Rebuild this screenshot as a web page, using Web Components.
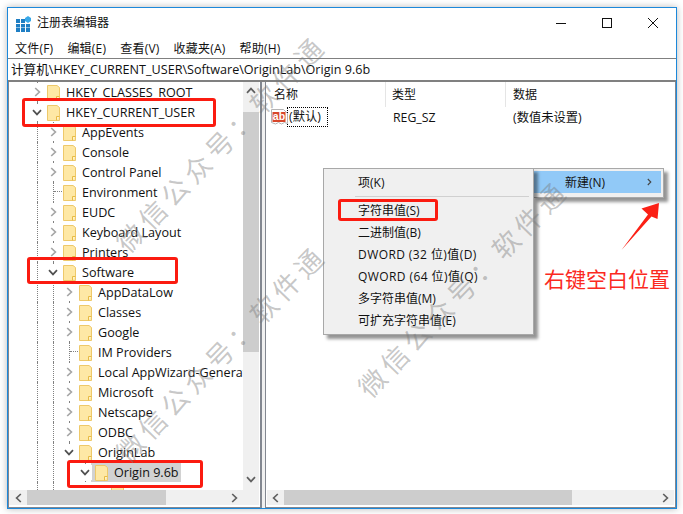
<!DOCTYPE html>
<html lang="zh-CN">
<head>
<meta charset="utf-8">
<title>注册表编辑器</title>
<style>
html,body{margin:0;padding:0;background:#fff;width:683px;height:514px;overflow:hidden}
body{font:12px "Open Sans","Noto Sans CJK SC",sans-serif;color:#111}
</style>
</head>
<body>
<reg-window>
  <title-bar slot="title">注册表编辑器</title-bar>
  <menu-bar slot="menu"><span>文件(F)</span><span>编辑(E)</span><span>查看(V)</span><span>收藏夹(A)</span><span>帮助(H)</span></menu-bar>
  <address-bar slot="address">计算机\HKEY_CURRENT_USER\Software\OriginLab\Origin 9.6b</address-bar>
  <tree-pane slot="tree">
    <tree-row level="0" state="closed" label="HKEY_CLASSES_ROOT"></tree-row>
    <tree-row level="0" state="open" label="HKEY_CURRENT_USER"></tree-row>
    <tree-row level="1" guides="0" state="closed" label="AppEvents"></tree-row>
    <tree-row level="1" guides="0" state="closed" label="Console"></tree-row>
    <tree-row level="1" guides="0" state="closed" label="Control Panel"></tree-row>
    <tree-row level="1" guides="0" state="leaf" label="Environment"></tree-row>
    <tree-row level="1" guides="0" state="closed" label="EUDC"></tree-row>
    <tree-row level="1" guides="0" state="closed" label="Keyboard Layout"></tree-row>
    <tree-row level="1" guides="0" state="closed" label="Printers"></tree-row>
    <tree-row level="1" guides="0" state="open" label="Software"></tree-row>
    <tree-row level="2" guides="0,1" state="closed" label="AppDataLow"></tree-row>
    <tree-row level="2" guides="0,1" state="closed" label="Classes"></tree-row>
    <tree-row level="2" guides="0,1" state="closed" label="Google"></tree-row>
    <tree-row level="2" guides="0,1" state="leaf" label="IM Providers"></tree-row>
    <tree-row level="2" guides="0,1" state="closed" label="Local AppWizard-Generated Applications"></tree-row>
    <tree-row level="2" guides="0,1" state="closed" label="Microsoft"></tree-row>
    <tree-row level="2" guides="0,1" state="closed" label="Netscape"></tree-row>
    <tree-row level="2" guides="0,1" state="closed" label="ODBC"></tree-row>
    <tree-row level="2" guides="0,1" state="open" label="OriginLab"></tree-row>
    <tree-row level="3" guides="0,1" state="open" selected label="Origin 9.6b"></tree-row>
    <tree-row level="4" guides="0,1" state="none" label=""></tree-row>
  </tree-pane>
  <list-pane slot="list">
    <list-head><span>名称</span><span>类型</span><span>数据</span></list-head>
    <list-item><span>(默认)</span><span>REG_SZ</span><span>(数值未设置)</span></list-item>
  </list-pane>
  <context-menu slot="overlay">
    <menu-item>项(K)</menu-item>
    <menu-sep></menu-sep>
    <menu-item>字符串值(S)</menu-item>
    <menu-item>二进制值(B)</menu-item>
    <menu-item wide>DWORD (32 位)值(D)</menu-item>
    <menu-item wide>QWORD (64 位)值(Q)</menu-item>
    <menu-item>多字符串值(M)</menu-item>
    <menu-item>可扩充字符串值(E)</menu-item>
  </context-menu>
  <sub-menu slot="overlay">新建(N)</sub-menu>
  <red-box slot="overlay" style="left:14px;top:90px;width:194px;height:29px"></red-box>
  <red-box slot="overlay" style="left:19px;top:249px;width:151px;height:27px"></red-box>
  <red-box slot="overlay" style="left:59px;top:452px;width:136px;height:28px"></red-box>
  <red-box slot="overlay" style="left:330px;top:191px;width:100px;height:22px"></red-box>
  <red-arrow slot="overlay"></red-arrow>
  <call-out slot="overlay">右键空白位置</call-out>
  <water-mark slot="overlay" style="left:211px;top:137px">微信公众号：软件通</water-mark>
  <water-mark slot="overlay" style="left:211px;top:347px">微信公众号：软件通</water-mark>
  <water-mark slot="overlay" style="left:453px;top:282px">微信公众号：软件通</water-mark>
</reg-window>

<script>
function define(name,css,html,init){
  customElements.define(name,class extends HTMLElement{
    constructor(){super();this.attachShadow({mode:'open'});}
    connectedCallback(){
      if(this._done)return;this._done=true;
      const a=n=>this.getAttribute(n);
      this.shadowRoot.innerHTML='<style>'+css+'</style>'+(typeof html==='function'?html(a,this):html);
      if(init)init(this);
    }
  });
}
const chevronR='<svg width="7" height="10" viewBox="0 0 7 10"><path d="M1.2 1 5.4 5 1.2 9" fill="none" stroke="currentColor" stroke-width="1.7"/></svg>';
const chevronL='<svg width="7" height="10" viewBox="0 0 7 10"><path d="M5.8 1 1.6 5 5.8 9" fill="none" stroke="currentColor" stroke-width="1.7"/></svg>';
const chevronU='<svg width="10" height="7" viewBox="0 0 10 7"><path d="M1 5.800 5 1.600 9 5.800" fill="none" stroke="currentColor" stroke-width="1.7"/></svg>';
const chevronD='<svg width="10" height="7" viewBox="0 0 10 7"><path d="M1 1.200 5 5.400 9 1.200" fill="none" stroke="currentColor" stroke-width="1.7"/></svg>';
const chevronSmall='<svg width="5" height="8" viewBox="0 0 5 8"><path d="M.8 1 3.800 4 .8 7" fill="none" stroke="currentColor" stroke-width="1.1"/></svg>';

define('reg-window',`
  :host{display:flex;flex-direction:column;position:relative;box-sizing:border-box;width:670px;height:502px;margin:7px 0 0 7px;
    border:1px solid #1c88da;background:#f0f0f0;box-shadow:0 0 7px rgba(0,0,0,.28)}
  .top{background:#fff}
  .panes{flex:1;display:flex;gap:3px;min-height:0}
  ::slotted([slot=tree]){width:254px}
  ::slotted([slot=list]){flex:1}
`,`<div class="top"><slot name="title"></slot><slot name="menu"></slot></div><slot name="address"></slot>
<div class="panes"><slot name="tree"></slot><slot name="list"></slot></div><slot name="overlay"></slot>`);

define('title-bar',`
  :host{display:flex;align-items:center;height:30px;padding:0 0 0 8px}
  svg.app{flex:none;margin-right:6px;margin-top:1px}
  .t{flex:1;font-size:12px;margin-top:-2px}
  .b{display:flex;width:46px;height:30px;align-items:center;justify-content:center}
  .b svg{display:block}
`,`<svg class="app" width="15" height="16" viewBox="0 0 15 16">
  <g fill="#1f7fc4"><rect x="0" y="3" width="4" height="4"/><rect x="5" y="3" width="4" height="4"/>
  <rect x="0" y="8" width="4" height="3.500"/><rect x="5" y="8" width="4" height="3.500"/><rect x="10" y="8" width="4" height="3.500"/>
  <rect x="0" y="12" width="4" height="4"/><rect x="5" y="12" width="4" height="4"/><rect x="10" y="12" width="4" height="4"/></g>
  <path d="M12 0l3 2v3l-3 2-3-2V2z" fill="#38a8e8"/>
</svg><div class="t"><slot></slot></div>
<div class="b"><svg width="10" height="10" viewBox="0 0 10 10"><path d="M0 5.500h10" stroke="#111" stroke-width="1"/></svg></div>
<div class="b"><svg width="10" height="10" viewBox="0 0 10 10"><rect x=".5" y=".5" width="9" height="9" fill="none" stroke="#111"/></svg></div>
<div class="b"><svg width="10" height="10" viewBox="0 0 10 10"><path d="M0 0l10 10M10 0L0 10" stroke="#111" stroke-width="1" fill="none"/></svg></div>`);

define('menu-bar',`
  :host{display:flex;height:20px;align-items:center;padding-left:7px;gap:14px;font-size:12px;letter-spacing:.22px;padding-bottom:1px;box-sizing:border-box}
`,`<slot></slot>`);

define('address-bar',`
  :host{display:flex;box-sizing:border-box;height:24px;align-items:center;padding:0 3px 2px;background:#fff;border:solid #808080;border-width:1px 0 2px;font-size:12.6px;white-space:nowrap}
`,`<slot></slot>`);

define('tree-pane',`
  :host{display:grid;grid-template-columns:1fr 16px;grid-template-rows:1fr 15px;box-sizing:border-box;background:#fff;border:solid #828790;border-width:0 2px 1px 1px;padding:0 1px 2px 0;min-height:0}
  .rows{overflow:hidden;padding-left:20px;min-width:0;min-height:0}
  .v{grid-row:1/3;grid-column:2;background:#f0f0f0;display:flex;flex-direction:column;align-items:center;color:#606060}
  .a{height:17px;display:flex;align-items:center;justify-content:center}
  .sp{height:13px;flex:none}
  .thumb{width:16px;height:240px;background:#cdcdcd;flex:none}
  .fill{flex:1}
  .h{grid-row:2;grid-column:1;background:#f0f0f0;display:flex;align-items:center;color:#606060}
  .h .ar{width:18px;display:flex;justify-content:center;flex:none}
  .h .thumbh{height:15px;width:139px;background:#cdcdcd;flex:none}
  .h .f{flex:1}
`,`<div class="rows"><slot></slot></div>
<div class="v"><div class="a">${chevronU}</div><div class="sp"></div><div class="thumb"></div><div class="fill"></div><div class="a">${chevronD}</div><div style="height:17px"></div></div>
<div class="h"><div class="ar">${chevronL}</div><div class="thumbh"></div><div class="f"></div><div class="ar">${chevronR}</div></div>`);

define('tree-row',`
  :host{display:flex;height:20px;white-space:nowrap;align-items:stretch;font-size:12.6px}
  .g{width:16px;flex:none;position:relative}
  .g.on::before,.c::before{content:"";position:absolute;left:8px;top:0;bottom:0;border-left:1px dotted #808080}
  .c{width:16px;flex:none;position:relative;display:flex;align-items:center;justify-content:center}
  .c svg{position:relative;background:#fff;display:block;padding:4px 2px;box-sizing:content-box}
  .c.closed{color:#a6a6a6}.c.open{color:#505050}
  .c.leaf::after{content:"";position:absolute;left:9px;right:-1px;top:9px;border-top:1px dotted #808080}
  .c.none::before{display:none}
  .s{display:flex;align-items:center;padding:0 2px 0 0}
  .s.sel{background:#d2d2d2;margin-left:-2px;padding:0 2px 0 4px}
  .f{display:block;margin:1px 6px 0 2px;flex:none}
  .s.sel .f{margin-left:0}
`,(a)=>{
  const lv=+a('level'),gs=(a('guides')||'').split(',');
  let h='';
  for(let i=0;i<lv;i++)h+=`<span class="g ${gs.includes(String(i))?'on':''}"></span>`;
  const st=a('state');
  const ch=st==='closed'?chevronR:st==='open'?chevronD:'';
  h+=`<span class="c ${st}">${ch}</span>`;
  h+=`<span class="s ${a('selected')!==null?'sel':''}"><svg class="f" width="13" height="16" viewBox="0 0 13 16">
   <path d="M.5.5h9.500l2.500 2V15.500H.5z" fill="#fee8a5" stroke="#eec96a"/><path d="M9.500 15.500v-4h3" fill="#fff3c9" stroke="#e8bb45"/></svg><span>${a('label')}</span></span>`;
  return h;
});

define('list-pane',`
  :host{display:flex;flex-direction:column;box-sizing:border-box;background:#fff;border:solid #828790;border-width:0 1px 1px 1px;min-height:0}
  .b{flex:1}
  .h{height:15px;margin:0 1px 2px 1px;background:#f0f0f0;display:flex;align-items:center;color:#606060}
  .ar{width:17px;display:flex;justify-content:center;flex:none}
  .t{width:288px;height:15px;background:#cdcdcd}
  .f{flex:1}
`,`<slot></slot><div class="b"></div><div class="h"><div class="ar">${chevronL}</div><div class="t"></div><div class="f"></div><div class="ar">${chevronR}</div></div>`);

define('list-head',`
  :host{display:grid;grid-template-columns:120px 120px 1fr;height:25px;font-size:12px;align-items:stretch}
  ::slotted(span){padding:3px 0 0 6px;border-right:1px solid #e5e5e5;box-sizing:border-box;height:25px}
  ::slotted(span:first-child){padding-left:8px}
  ::slotted(span:last-child){padding-left:7px;border-right:0}
`,`<slot></slot>`);

define('list-item',`
  :host{display:grid;grid-template-columns:120px 120px 1fr;height:20px;font-size:12.3px;align-items:center;position:relative}
  ::slotted(span:first-child){margin-left:21px;justify-self:start;padding:0 6px 0 1px;border:1px dotted #000;height:18px;line-height:18px}
  ::slotted(span){padding-left:7px}
  svg{position:absolute;left:5px;top:2px}
`,`<svg width="18" height="17" viewBox="0 0 18 17"><path d="M.5.5h12l4 4v10l-3-1-3 1.500-3-1.500-3 1.500-4-1.500z" fill="#fff" stroke="#b4b4b4"/><rect x="1.500" y="3" width="13" height="10" fill="#d8472b"/><text x="8" y="11.200" font-size="10.500" font-weight="700" fill="#fff" text-anchor="middle" font-family="Liberation Sans,sans-serif">ab</text></svg><slot></slot>`);

define('context-menu',`
  :host{position:absolute;left:315px;top:160px;box-sizing:border-box;width:211px;height:167px;background:#f0f0f0;border:1px solid #a8a8a8;padding:2px;box-shadow:4px 4px 3px rgba(0,0,0,.42);display:block;font-size:12px;z-index:2}
`,`<slot></slot>`);
define('menu-item',`
  :host{display:flex;align-items:center;height:22px;padding-left:32px;white-space:nowrap}
  :host([wide]){letter-spacing:.42px}
`,`<slot></slot>`);
define('menu-sep',`
  :host{display:block;height:1px;margin:3px 2px 2px 29px;background:#d0d0d0}
`,``);
define('sub-menu',`
  :host{position:absolute;left:525px;top:160px;box-sizing:border-box;width:131px;height:30px;background:#f0f0f0;border:1px solid #a8a8a8;border-left:0;padding:2px 2px 2px 0;box-shadow:4px 4px 3px rgba(0,0,0,.42);display:block;font-size:12px;z-index:1}
  .i{height:22px;background:#91c9f7;display:flex;align-items:center;padding-left:32px;justify-content:space-between;padding-right:9px;color:#111}
  .i svg{color:#444}
`,`<div class="i"><span><slot></slot></span>${chevronSmall}</div>`);

define('red-box',`:host{position:absolute;box-sizing:border-box;border:3px solid #fb1b10;border-radius:3px;z-index:3;display:block}`,``);
define('red-arrow',`:host{position:absolute;left:606px;top:186px;z-index:3;display:block;width:50px;height:60px}svg{display:block}`,
 `<svg width="50" height="60" viewBox="0 0 50 60"><path d="M7.500 56 L34 20.500 L27.500 14.500 L45 9 L43.500 25 L37.500 22.500 Z" fill="#fb2015"/></svg>`);
define('call-out',`:host{position:absolute;left:536px;top:256px;z-index:3;display:block;color:#fb2a1f;font:21px/28px "Noto Sans CJK SC",sans-serif;white-space:nowrap}`,`<slot></slot>`);
define('water-mark',`:host{position:absolute;z-index:4;display:block;white-space:nowrap;color:rgba(120,120,120,.42);font:27px/32px "Noto Sans CJK SC",sans-serif;letter-spacing:5px;padding-left:5px;transform:translate(-50%,-50%) rotate(-46deg);pointer-events:none}`,`<slot></slot>`);
</script>
</body>
</html>
